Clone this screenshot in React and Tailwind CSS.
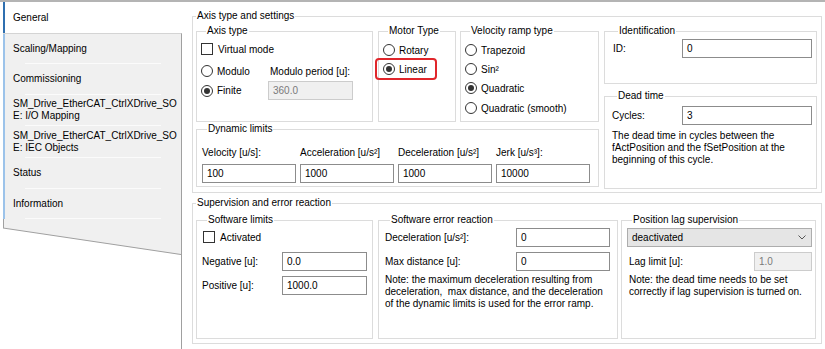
import React from 'react';

const TABS = [
    { label: 'Scaling/Mapping', h: 'h-[30px]' },
    { label: 'Commissioning', h: 'h-[31px]' },
    { label: ['SM_Drive_EtherCAT_CtrlXDrive_SO', 'E: I/O Mapping'], h: 'h-[31px]' },
    { label: ['SM_Drive_EtherCAT_CtrlXDrive_SO', 'E: IEC Objects'], h: 'h-[32px]' },
    { label: 'Status', h: 'h-[31px]' },
    { label: 'Information', h: 'h-[30px]' },
];

function Group({ label, className = '', lx = 'ml-[5px]', children }) {
    return (
        <div className={`border border-[#dcdcdc] ${className}`}>
            <div className={`-mt-[7px] ${lx} w-fit bg-white px-[1px] h-[12px] leading-[12px] whitespace-nowrap`}>{label}</div>
            {children}
        </div>
    );
}

function Radio({ checked, label, className = '' }) {
    return (
        <div className={`flex items-center h-[14px] ${className}`}>
            <span className="w-[12px] h-[12px] rounded-full border border-[#333] bg-white flex items-center justify-center shrink-0">
                {checked && <span className="w-[6px] h-[6px] rounded-full bg-[#333]" />}
            </span>
            <span className="ml-[4px] whitespace-nowrap">{label}</span>
        </div>
    );
}

function Check({ label, className = '' }) {
    return (
        <div className={`flex items-center h-[14px] ${className}`}>
            <span className="w-[12px] h-[12px] border border-[#333] bg-white shrink-0" />
            <span className="ml-[5px] whitespace-nowrap">{label}</span>
        </div>
    );
}

function Field({ value, className = '', disabled }) {
    return (
        <div
            className={`h-[19px] flex items-center px-[4px] border ${
                disabled ? 'bg-[#f0f0f0] border-[#cccccc] text-[#7a7a7a]' : 'bg-white border-[#8c8c8c] text-black'
            } ${className}`}
        >
            {value}
        </div>
    );
}

export default function App() {
    return (
        <div className="w-[825px] h-[349px] overflow-hidden bg-white border-t-2 border-[#b4b4b4] flex font-['Liberation_Sans',Arial,sans-serif] text-[10px] text-black">
            {/* tab column */}
            <div className="w-[182px] shrink-0 flex flex-col">
                <div className="h-[31px] pl-[3px] flex">
                    <div className="flex-1 border-l-2 border-[#2f6fb0] bg-white flex items-center pl-[8px]">General</div>
                </div>
                <div className="ml-[3px] w-[179px] bg-[#f0f0f0] border-t border-r border-t-[#d4d4d4] border-r-[#a0a0a0]">
                    {TABS.map((t, i) => (
                        <div key={i} className={`border-l-2 border-[#9cc3ea] ${t.h} flex flex-col`}>
                            <div className="flex-1 flex flex-col justify-center pl-[8px] leading-[12px] whitespace-nowrap">
                                {Array.isArray(t.label) ? t.label.map((l) => <span key={l}>{l}</span>) : t.label}
                            </div>
                            <div className="h-px mx-[20px] bg-[#fbfbfb]" />
                        </div>
                    ))}
                </div>
                <svg width="179" height="36" className="ml-[3px] block shrink-0">
                    <polygon points="0,0 179,0 179,36 0,9" fill="#f0f0f0" />
                    <line x1="0.5" y1="0" x2="0.5" y2="9" stroke="#a0a0a0" />
                    <line x1="0" y1="9" x2="178" y2="35.5" stroke="#a0a0a0" />
                    <line x1="178.5" y1="0" x2="178.5" y2="36" stroke="#a0a0a0" />
                </svg>
                <div className="flex-1 ml-[3px] w-[179px] border-r border-[#a0a0a0]" />
            </div>

            {/* content */}
            <div className="flex-1 pl-[10px]">
                <Group label="Axis type and settings" lx="ml-[3px]" className="mt-[14px] w-[630px] h-[177px]">
                    <div className="flex mt-[9px] pl-[3px]">
                        <div className="w-[403px]">
                            <div className="flex h-[91px]">
                                <Group label="Axis type" className="w-[177px] h-full pl-[4px]">
                                    <Check label="Virtual mode" className="mt-[5px]" />
                                    <div className="flex items-center mt-[8px] h-[14px]">
                                        <Radio label="Modulo" className="w-[67px]" />
                                        <span className="ml-[2px]">Modulo period [u]:</span>
                                    </div>
                                    <div className="flex items-center mt-[3px] h-[19px]">
                                        <Radio checked label="Finite" className="w-[67px]" />
                                        <Field value="360.0" disabled className="w-[85px]" />
                                    </div>
                                </Group>
                                <Group label="Motor Type" className="ml-[5px] w-[78px] h-full pl-[4px]">
                                    <Radio label="Rotary" className="mt-[6px]" />
                                    <div className="relative mt-[5px]">
                                        <Radio checked label="Linear" />
                                        <div className="absolute -left-[8px] -top-[4px] w-[62px] h-[22px] border-2 border-[#e0262b] rounded-[4px]" />
                                    </div>
                                </Group>
                                <Group label="Velocity ramp type" className="ml-[4px] w-[139px] h-full pl-[4px]">
                                    <Radio label="Trapezoid" className="mt-[6px]" />
                                    <Radio label="Sin²" className="mt-[5px]" />
                                    <Radio checked label="Quadratic" className="mt-[5px]" />
                                    <Radio label="Quadratic (smooth)" className="mt-[6px]" />
                                </Group>
                            </div>
                            <Group label="Dynamic limits" className="mt-[7px] h-[58px] pl-[5px]">
                                <div className="grid grid-cols-4 w-[392px] mt-[10px] h-[12px] items-center whitespace-nowrap">
                                    <span>Velocity [u/s]:</span>
                                    <span>Acceleration [u/s²]</span>
                                    <span>Deceleration [u/s²]</span>
                                    <span>Jerk [u/s³]:</span>
                                </div>
                                <div className="grid grid-cols-4 w-[392px] mt-[7px]">
                                    <Field value="100" className="w-[94px]" />
                                    <Field value="1000" className="w-[94px]" />
                                    <Field value="1000" className="w-[94px]" />
                                    <Field value="10000" className="w-[94px]" />
                                </div>
                            </Group>
                        </div>
                        <div className="ml-[5px] w-[213px]">
                            <Group label="Identification" className="h-[53px] pl-[8px]">
                                <div className="flex items-center mt-[2px]">
                                    <span className="w-[69px]">ID:</span>
                                    <Field value="0" className="w-[130px]" />
                                </div>
                            </Group>
                            <Group label="Dead time" className="mt-[12px] h-[93px] pl-[7px]">
                                <div className="flex items-center mt-[4px]">
                                    <span className="w-[70px]">Cycles:</span>
                                    <Field value="3" className="w-[130px]" />
                                </div>
                                <p className="mt-[5px] leading-[12px] whitespace-nowrap">
                                    The dead time in cycles between the
                                    <br />
                                    fActPosition and the fSetPosition at the
                                    <br />
                                    beginning of this cycle.
                                </p>
                            </Group>
                        </div>
                    </div>
                </Group>

                <Group label="Supervision and error reaction" lx="ml-[3px]" className="mt-[10px] w-[630px] h-[141px]">
                    <div className="flex mt-[11px] pl-[3px]">
                        <Group label="Software limits" className="w-[177px] h-[119px] pl-[5px]">
                            <Check label="Activated" className="mt-[4px] ml-[1px]" />
                            <div className="flex items-center mt-[8px]">
                                <span className="w-[80px]">Negative [u]:</span>
                                <Field value="0.0" className="w-[85px]" />
                            </div>
                            <div className="flex items-center mt-[5px]">
                                <span className="w-[80px]">Positive [u]:</span>
                                <Field value="1000.0" className="w-[85px]" />
                            </div>
                        </Group>
                        <Group label="Software error reaction" className="ml-[5px] w-[240px] h-[119px] pl-[6px]">
                            <div className="flex items-center mt-[2px]">
                                <span className="w-[131px]">Deceleration [u/s²]:</span>
                                <Field value="0" className="w-[94px]" />
                            </div>
                            <div className="flex items-center mt-[5px]">
                                <span className="w-[131px]">Max distance [u]:</span>
                                <Field value="0" className="w-[94px]" />
                            </div>
                            <p className="mt-[3px] leading-[12px] whitespace-nowrap">
                                Note: the maximum deceleration resulting from
                                <br />
                                deceleration,&nbsp; max distance, and the deceleration
                                <br />
                                of the dynamic limits is used for the error ramp.
                            </p>
                        </Group>
                        <Group label="Position lag supervision" className="ml-[3px] w-[195px] h-[119px] pl-[5px]">
                            <div className="mt-[2px] w-[185px] h-[19px] bg-[#e5e5e5] border border-[#adadad] flex items-center justify-between pl-[4px] pr-[5px]">
                                <span>deactivated</span>
                                <svg width="8" height="5" viewBox="0 0 8 5">
                                    <polyline points="0.5,0.5 4,4 7.5,0.5" fill="none" stroke="#555" strokeWidth="1" />
                                </svg>
                            </div>
                            <div className="flex items-center mt-[5px]">
                                <span className="w-[127px] pl-[2px]">Lag limit [u]:</span>
                                <Field value="1.0" disabled className="w-[58px]" />
                            </div>
                            <p className="mt-[3px] pl-[2px] leading-[12px] whitespace-nowrap">
                                Note: the dead time needs to be set
                                <br />
                                correctly if lag supervision is turned on.
                            </p>
                        </Group>
                    </div>
                </Group>
            </div>
        </div>
    );
}
